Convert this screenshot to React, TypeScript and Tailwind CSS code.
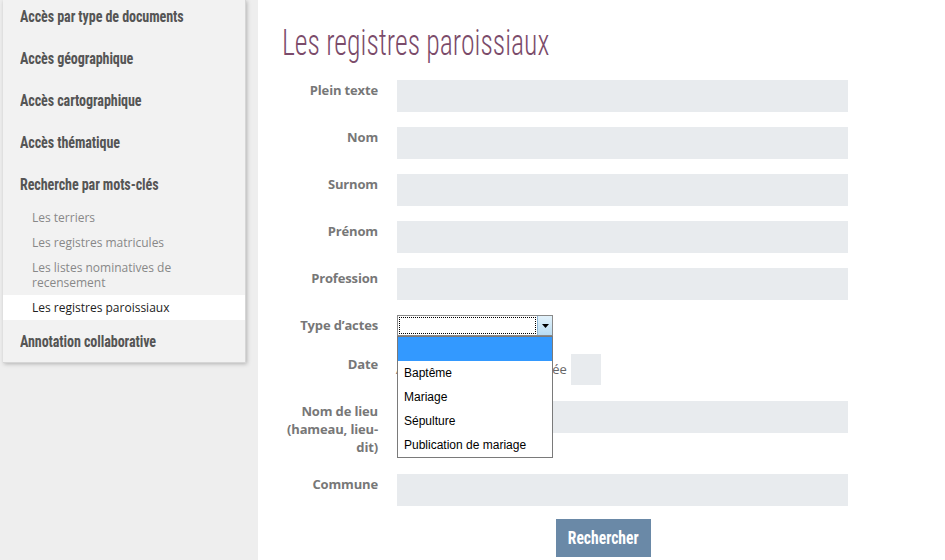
import React from "react";

const headings1 = ["Accès par type de documents", "Accès géographique", "Accès cartographique", "Accès thématique", "Recherche par mots-clés"];

function Heading({ children }: { children: React.ReactNode }) {
  return (
    <div className="h-[42px] flex items-center pt-[2px] pl-[17px] text-[16px] font-bold text-[#555555] tracking-[-0.1px] [font-family:'Liberation_Sans_Narrow','Roboto_Condensed',sans-serif] [font-stretch:condensed]">
      <span className="inline-block origin-left scale-x-[0.88] whitespace-nowrap">{children}</span>
    </div>
  );
}

function Sub({ children, active }: { children: React.ReactNode; active?: boolean }) {
  return (
    <div className={"py-[5px] pl-[29px] pr-4 text-[12px] leading-[15px] [font-family:'Open_Sans',sans-serif] " + (active ? "bg-white text-[#222222]" : "text-[#888888]")}>
      {children}
    </div>
  );
}

function Row({ label, children, className }: { label: React.ReactNode; children: React.ReactNode; className?: string }) {
  return (
    <div className={"flex " + (className || "")}>
      <div className="w-[96px] text-right pt-[1px] text-[13px] leading-[18px] font-bold tracking-[-0.15px] text-[#777777] [font-family:'Open_Sans',sans-serif]">{label}</div>
      <div className="ml-[19px]">{children}</div>
    </div>
  );
}

function Input() {
  return <div className="w-[451px] h-[32px] bg-[#e8ebee]" />;
}

export default function App() {
  return (
    <div className="flex w-[945px] h-[560px] overflow-hidden bg-white">
      <div className="w-[258px] shrink-0 bg-[#eeeeee] pl-[3px]">
        <div className="w-[243px] bg-[#f2f2f2] border-r border-b border-[#d6d6d6] shadow-[1px_1px_4px_rgba(0,0,0,0.25)] overflow-hidden">
          <div className="-mt-[5px]">
            {headings1.map((h) => (
              <Heading key={h}>{h}</Heading>
            ))}
            <Sub>Les terriers</Sub>
            <Sub>Les registres matricules</Sub>
            <Sub>
              Les listes nominatives de
              <br />
              recensement
            </Sub>
            <Sub active>Les registres paroissiaux</Sub>
            <Heading>Annotation collaborative</Heading>
          </div>
        </div>
      </div>

      <div className="flex-1 pl-[24px] relative">
        <h1 className="mt-[22px] text-[36px] leading-[42px] font-light text-[#7b4b6a] whitespace-nowrap [font-family:'Liberation_Sans_Narrow','Roboto_Condensed',sans-serif] [font-stretch:condensed]">
          <span className="inline-block origin-left scale-x-[0.77]">Les registres paroissiaux</span>
        </h1>
        <div className="mt-[16px] flex flex-col">
          <Row label="Plein texte"><Input /></Row>
          <Row label="Nom" className="mt-[15px]"><Input /></Row>
          <Row label="Surnom" className="mt-[15px]"><Input /></Row>
          <Row label="Prénom" className="mt-[15px]"><Input /></Row>
          <Row label="Profession" className="mt-[15px]"><Input /></Row>
          <Row label="Type d’actes" className="mt-[15px] h-[24px]">
            <div className="relative w-[156px] h-[21px]">
              <div className="absolute inset-0 border border-[#8a8a8a] bg-white flex">
                <div className="flex-1 m-[1px] border border-dotted border-black" />
                <div className="w-[15px] h-full bg-gradient-to-b from-[#e3f2fb] to-[#b9dcf2] border-l border-[#8fb6d3] flex items-center justify-center">
                  <svg width="7" height="4" viewBox="0 0 7 4"><path d="M0 0h7L3.5 4z" fill="#000" /></svg>
                </div>
              </div>
              <div className="absolute left-0 top-[21px] w-[156px] z-10 bg-white border border-[#7a7a7a] text-[12px] text-black [font-family:'Liberation_Sans',sans-serif]">
                <div className="h-[24px] bg-[#3399ff]" />
                <div className="h-[24px] pl-[6px] flex items-center">Baptême</div>
                <div className="h-[24px] pl-[6px] flex items-center">Mariage</div>
                <div className="h-[24px] pl-[6px] flex items-center">Sépulture</div>
                <div className="h-[24px] pl-[6px] flex items-center">Publication de mariage</div>
              </div>
            </div>
          </Row>
          <Row label="Date" className="mt-[15px]">
            <div className="flex items-center h-[31px]">
              <span className="text-[13px] text-[#666666] whitespace-nowrap [font-family:'Open_Sans',sans-serif] -ml-[1px]">A partir de l’année ou année</span>
              <div className="ml-[4px] w-[30px] h-[31px] bg-[#e8ebee]" />
            </div>
          </Row>
          <Row label={<>Nom de lieu<br />(hameau, lieu-<br />dit)</>} className="mt-[16px]"><Input /></Row>
          <Row label="Commune" className="mt-[18px]"><Input /></Row>
          <div className="mt-[13px] ml-[274px]">
            <button className="w-[95px] h-[38px] bg-[#6a89a7] text-white text-[19px] font-bold [font-family:'Liberation_Sans_Narrow','Roboto_Condensed',sans-serif] [font-stretch:condensed]">
              <span className="inline-block scale-x-[0.82]">Rechercher</span>
            </button>
          </div>
        </div>
      </div>
    </div>
  );
}
